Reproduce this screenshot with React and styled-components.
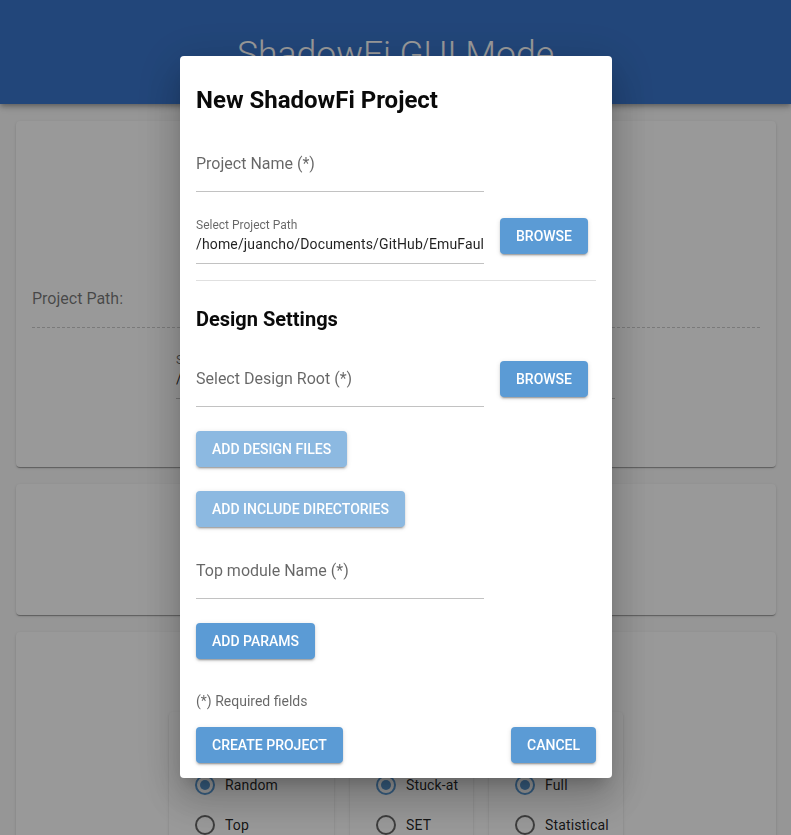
import React from 'react';
import styled, { createGlobalStyle } from 'styled-components';

const Global = createGlobalStyle`
  html, body { margin: 0; padding: 0; height: 100%; overflow: hidden; }
  body { font-family: Roboto, "Liberation Sans", Arial, sans-serif; background: #fafafa; }
  * { box-sizing: border-box; }
`;

const PRIMARY = '#5b9bd5';

const Header = styled.header`
  height: 104px;
  background: #3975cb;
  box-shadow: 0 2px 4px -1px rgba(0,0,0,.2), 0 4px 5px 0 rgba(0,0,0,.14), 0 1px 10px 0 rgba(0,0,0,.12);
  display: flex;
  justify-content: center;
  padding-top: 33px;
`;

const HeaderTitle = styled.h1`
  margin: 0;
  font-weight: 300;
  font-size: 35.5px;
  line-height: 42px;
  color: #fff;
`;

const Main = styled.main`
  display: flex;
  flex-direction: column;
  gap: 17px;
  padding: 17px 15px 0 16px;
`;

const Card = styled.section`
  background: #fff;
  border-radius: 4px;
  height: ${p => p.$h}px;
  flex-shrink: 0;
  box-shadow: 0 2px 1px -1px rgba(0,0,0,.2), 0 1px 1px 0 rgba(0,0,0,.14), 0 1px 3px 0 rgba(0,0,0,.12);
`;

const ProjectCard = styled(Card)`
  padding: 166px 16px 0 16px;
`;

const PathRowLabel = styled.div`
  font-size: 16px;
  line-height: 24px;
  color: rgba(0,0,0,.54);
  padding-bottom: 16px;
  border-bottom: 1px dashed rgba(0,0,0,.2);
`;

const ModesCard = styled(Card)`
  padding-top: 80px;
  display: flex;
  justify-content: center;
  align-items: flex-start;
  gap: 16px;
`;

const OptionCard = styled.div`
  width: ${p => p.$w}px;
  height: 220px;
  background: #fff;
  border-radius: 4px;
  padding: 53px 0 0 26px;
  box-shadow: 0 2px 1px -1px rgba(0,0,0,.2), 0 1px 1px 0 rgba(0,0,0,.14), 0 1px 3px 0 rgba(0,0,0,.12);
`;

const RadioRow = styled.label`
  display: flex;
  align-items: center;
  gap: 10px;
  height: 40px;
  font-size: 14px;
  letter-spacing: 0.15px;
  color: rgba(0,0,0,.87);
`;

const Radio = ({ checked }) => (
  <svg width="20" height="20" viewBox="0 0 20 20">
    <circle cx="10" cy="10" r="9" fill="none" stroke={checked ? PRIMARY : 'rgba(0,0,0,0.6)'} strokeWidth="2" />
    {checked && <circle cx="10" cy="10" r="5" fill={PRIMARY} />}
  </svg>
);

const Backdrop = styled.div`
  position: fixed;
  inset: 0;
  background: rgba(0,0,0,.4);
  display: flex;
  justify-content: center;
  align-items: flex-start;
  padding: 56px 0 0 1px;
`;

const Dialog = styled.div`
  width: 432px;
  background: #fff;
  border-radius: 4px;
  padding: 16px 16px 15px;
  display: flex;
  flex-direction: column;
  box-shadow: 0 11px 15px -7px rgba(0,0,0,.2), 0 24px 38px 3px rgba(0,0,0,.14), 0 9px 46px 8px rgba(0,0,0,.12);
`;

const DialogTitle = styled.h2`
  margin: 0;
  padding-top: 12px;
  font-size: 24px;
  line-height: 32px;
  font-weight: 700;
  color: #0a0a0a;
`;

const SectionTitle = styled.h3`
  margin: 24px 0 0;
  font-size: 20px;
  line-height: 28px;
  font-weight: 700;
  color: #0a0a0a;
`;

const Field = styled.div`
  width: ${p => p.$w || 288}px;
  margin-top: ${p => p.$mt || 0}px;
  padding: 6px 0 15px;
  border-bottom: 1px solid #c2c2c2;
  font-size: 16px;
  line-height: 24px;
  color: rgba(0,0,0,.6);
`;

const FilledField = styled.div`
  width: ${p => p.$w || 288}px;
  margin: ${p => p.$m || 0};
  padding-bottom: 7px;
  border-bottom: 1px solid #c2c2c2;
  flex-shrink: 0;
`;

const SmallLabel = styled.div`
  font-size: 12px;
  line-height: 14px;
  color: rgba(0,0,0,.6);
`;

const Value = styled.div`
  font-size: 14px;
  letter-spacing: 0.15px;
  line-height: 24px;
  color: rgba(0,0,0,.87);
  white-space: nowrap;
  overflow: hidden;
`;

const Row = styled.div`
  display: flex;
  align-items: flex-start;
  gap: 16px;
  margin-top: ${p => p.$mt || 0}px;
`;

const Divider = styled.hr`
  margin: 16px 0 0;
  border: none;
  height: 1px;
  background: rgba(0,0,0,.12);
`;

const Button = styled.button`
  align-self: flex-start;
  height: 36px;
  margin-top: ${p => p.$mt || 0}px;
  padding: 0 16px;
  border: none;
  border-radius: 4px;
  background: ${p => (p.$faded ? '#8cb9e1' : PRIMARY)};
  color: #fff;
  font-family: Roboto, "Liberation Sans", Arial, sans-serif;
  font-size: 14px;
  font-weight: 500;
  letter-spacing: 0;
  text-transform: uppercase;
  white-space: nowrap;
  box-shadow: 0 3px 1px -2px rgba(0,0,0,.2), 0 2px 2px 0 rgba(0,0,0,.14), 0 1px 5px 0 rgba(0,0,0,.12);
`;

const Note = styled.p`
  margin: 32px 0 0;
  font-size: 14px;
  line-height: 20px;
  color: rgba(0,0,0,.6);
`;

const Footer = styled.div`
  display: flex;
  justify-content: space-between;
  margin-top: 16px;
`;

const PATH = '/home/juancho/Documents/GitHub/EmuFaultSim';

const options = [
  { w: 165, items: ['Random', 'Top'] },
  { w: 123, items: ['Stuck-at', 'SET'] },
  { w: 134, items: ['Full', 'Statistical'] },
];

export default function App() {
  return (
    <>
      <Global />
      <Header>
        <HeaderTitle>ShadowFi GUI Mode</HeaderTitle>
      </Header>
      <Main>
        <ProjectCard $h={346}>
          <PathRowLabel>Project Path:</PathRowLabel>
          <FilledField $w={439} $m="25px 0 0 144px">
            <SmallLabel>Select Project Path</SmallLabel>
            <Value>{PATH}</Value>
          </FilledField>
        </ProjectCard>
        <Card $h={131} />
        <ModesCard $h={330}>
          {options.map((o, i) => (
            <OptionCard key={i} $w={o.w}>
              {o.items.map((it, j) => (
                <RadioRow key={it}>
                  <Radio checked={j === 0} />
                  {it}
                </RadioRow>
              ))}
            </OptionCard>
          ))}
        </ModesCard>
      </Main>
      <Backdrop>
        <Dialog>
          <DialogTitle>New ShadowFi Project</DialogTitle>
          <Field $mt={30}>Project Name (*)</Field>
          <Row $mt={26}>
            <FilledField>
              <SmallLabel>Select Project Path</SmallLabel>
              <Value>{PATH}</Value>
            </FilledField>
            <Button>Browse</Button>
          </Row>
          <Divider />
          <SectionTitle>Design Settings</SectionTitle>
          <Row $mt={28}>
            <Field>Select Design Root (*)</Field>
            <Button>Browse</Button>
          </Row>
          <Button $faded $mt={24}>Add Design Files</Button>
          <Button $faded $mt={24}>Add Include Directories</Button>
          <Field $mt={26}>Top module Name (*)</Field>
          <Button $mt={24}>Add Params</Button>
          <Note>(*) Required fields</Note>
          <Footer>
            <Button>Create Project</Button>
            <Button>Cancel</Button>
          </Footer>
        </Dialog>
      </Backdrop>
    </>
  );
}
